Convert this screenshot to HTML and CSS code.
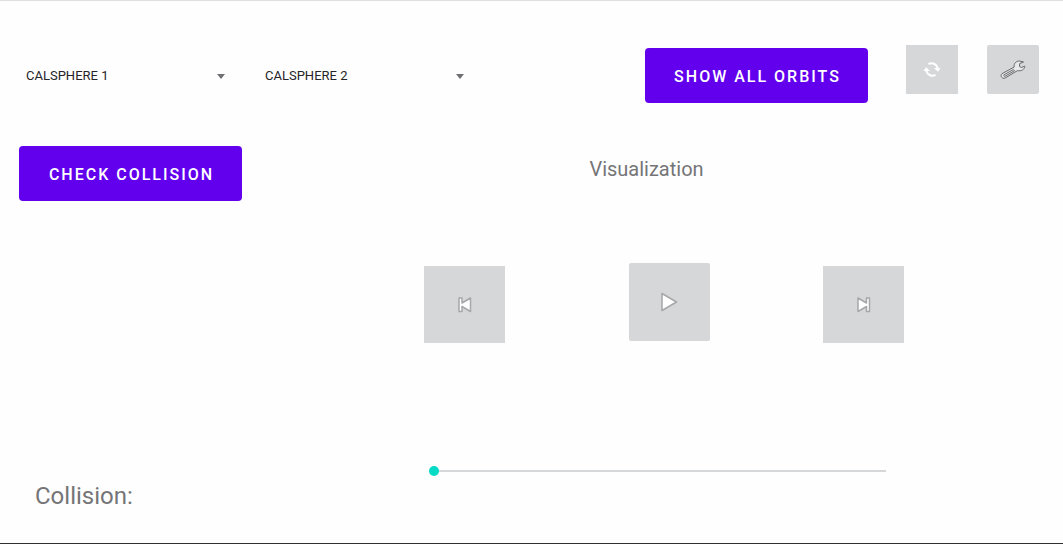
FILE: index.html
```
<!DOCTYPE html>
<html lang="en">
<head>
<meta charset="utf-8">
<meta name="viewport" content="width=device-width, initial-scale=1">
<title>Orbit collision</title>
<link rel="stylesheet" href="styles.css">
</head>
<body>
<div class="app">
  <header class="toolbar">
    <div class="pickers">
      <div class="picker">
        <select class="picker-select" aria-label="First satellite"><option>CALSPHERE 1</option><option>CALSPHERE 2</option></select>
        <svg class="picker-arrow" width="8" height="5" viewBox="0 0 8 5" aria-hidden="true"><path d="M0 0h8L4 5z" fill="#707073"/></svg>
      </div>
      <div class="picker">
        <select class="picker-select" aria-label="Second satellite"><option>CALSPHERE 2</option><option>CALSPHERE 1</option></select>
        <svg class="picker-arrow" width="8" height="5" viewBox="0 0 8 5" aria-hidden="true"><path d="M0 0h8L4 5z" fill="#707073"/></svg>
      </div>
    </div>
    <button class="button" type="button">SHOW ALL ORBITS</button>
    <div class="tools">
      <button class="icon-button tool" type="button" aria-label="Refresh">
        <svg width="18" height="18" viewBox="0 0 18 18" fill="none" stroke="#fff" stroke-width="2" aria-hidden="true">
          <path d="M5.500 3.200A6 6 0 0 1 14.600 7"/><path d="M12.500 13.800A6 6 0 0 1 3.400 10"/>
          <path d="M10.900 7h6.600L15 10.800z" fill="#fff" stroke="none"/><path d="M.500 10h6.600L3 6.200z" fill="#fff" stroke="none"/>
        </svg>
      </button>
      <button class="icon-button tool settings" type="button" aria-label="Settings">
        <svg width="26" height="20" viewBox="0 0 26 20" fill="none" stroke="#66686a" stroke-linejoin="round" aria-hidden="true">
          <path d="M2 13.700 14.200 7C13.700 3.200 16.200 1 19.500 1L23.500 2 19.700 3.500 19.500 6.500 21.300 7.500 24.800 6.200C24.600 9.500 21.500 11.400 17.300 10.700L5.200 18C2 19.200-.200 15.900 2 13.700Z" fill="#e7e8e9"/>
          <path d="M4 14.800 13.400 9.500 14.500 10.700 5 16.300C4 16.600 3.300 15.500 4 14.800Z"/>
        </svg>
      </button>
    </div>
  </header>
  <main class="content">
    <section class="check">
      <button class="button" type="button">CHECK COLLISION</button>
      <p class="result">Collision:</p>
    </section>
    <section class="player">
      <h1 class="title">Visualization</h1>
      <div class="controls">
        <button class="icon-button control" type="button" aria-label="Previous">
          <svg width="16" height="18" viewBox="0 0 16 18" fill="#fff" stroke="#a5a7a9" stroke-width="1.500" stroke-linejoin="round" aria-hidden="true"><path d="M2 2h3v5L13.500 2v13.500L5 10.500v5H2z"/></svg>
        </button>
        <button class="icon-button control play" type="button" aria-label="Play">
          <svg width="18" height="20" viewBox="0 0 18 20" fill="#fff" stroke="#a5a7a9" stroke-width="1.500" stroke-linejoin="round" aria-hidden="true"><path d="M2 1.500 16.500 10 2 18.500z"/></svg>
        </button>
        <button class="icon-button control" type="button" aria-label="Next">
          <svg width="16" height="18" viewBox="0 0 16 18" fill="#fff" stroke="#a5a7a9" stroke-width="1.500" stroke-linejoin="round" aria-hidden="true"><path d="M13.500 2h-3v5L2 2v13.500l8.500-5v5h3z"/></svg>
        </button>
      </div>
      <input class="timeline" type="range" min="0" max="100" value="0" aria-label="Timeline">
    </section>
  </main>
</div>
</body>
</html>
```
FILE: styles.css
```
* { box-sizing: border-box; }

body {
  margin: 0;
  background: #fefefe;
  font-family: Roboto, "Liberation Sans", sans-serif;
}

.app {
  min-height: 100vh;
  display: flex;
  flex-direction: column;
  border-top: 1px solid #dfdee1;
  border-bottom: 1px solid #303033;
}

.toolbar {
  display: flex;
  align-items: flex-start;
  padding: 44px 24px 0 20px;
}

.pickers {
  display: flex;
  flex: 1;
  gap: 32px;
  padding: 17px 0 0 6px;
}

.picker {
  display: grid;
  width: 207px;
  align-items: center;
}

.picker-select,
.picker-arrow { grid-area: 1 / 1; }

.picker-select {
  appearance: none;
  width: 100%;
  height: 28px;
  margin: 0;
  padding: 0;
  border: 0;
  background: transparent;
  color: #252528;
  font: 400 13px/20px Roboto, "Liberation Sans", sans-serif;
}

.picker-arrow {
  justify-self: end;
  margin-right: 8px;
  pointer-events: none;
}

.button {
  width: 223px;
  height: 55px;
  margin: 0;
  padding: 2px 0 0 2px;
  border: 0;
  border-radius: 4px;
  background: #6200ee;
  color: #fff;
  font: 500 16px/24px Roboto, "Liberation Sans", sans-serif;
  letter-spacing: 2px;
  white-space: nowrap;
}

.toolbar .button { margin-top: 3px; }

.tools {
  display: flex;
  gap: 29px;
  padding-left: 38px;
}

.icon-button {
  display: flex;
  align-items: center;
  justify-content: center;
  padding: 0;
  border: 0;
  background: #d6d7d8;
}

.tool {
  width: 52px;
  height: 49px;
}

.settings,
.play { border-radius: 2px; }

.content {
  flex: 1;
  display: grid;
  grid-template-columns: 385px 1fr;
  padding: 43px 159px 31px 19px;
}

.check {
  display: flex;
  flex-direction: column;
  align-items: flex-start;
  justify-content: space-between;
}

.result {
  margin: 0;
  padding-left: 16px;
  color: #757577;
  font-size: 24px;
  line-height: 32px;
}

.player {
  display: flex;
  flex-direction: column;
  padding-left: 20px;
}

.title {
  margin: 9px 35px 0 0;
  color: #757577;
  font-size: 20px;
  font-weight: 400;
  line-height: 28px;
  text-align: center;
}

.controls {
  display: flex;
  align-items: flex-end;
  justify-content: space-between;
  margin-top: 80px;
}

.control {
  width: 81px;
  height: 77px;
}

.play {
  height: 78px;
  margin: 0 0 2px 10px;
}

.timeline {
  appearance: none;
  height: 20px;
  margin: 118px 18px 0 5px;
  background: transparent;
}

.timeline::-webkit-slider-runnable-track {
  height: 2px;
  background: #d6d7d9;
}

.timeline::-webkit-slider-thumb {
  appearance: none;
  width: 10px;
  height: 10px;
  margin-top: -4px;
  border-radius: 50%;
  background: #03dac5;
}
```
